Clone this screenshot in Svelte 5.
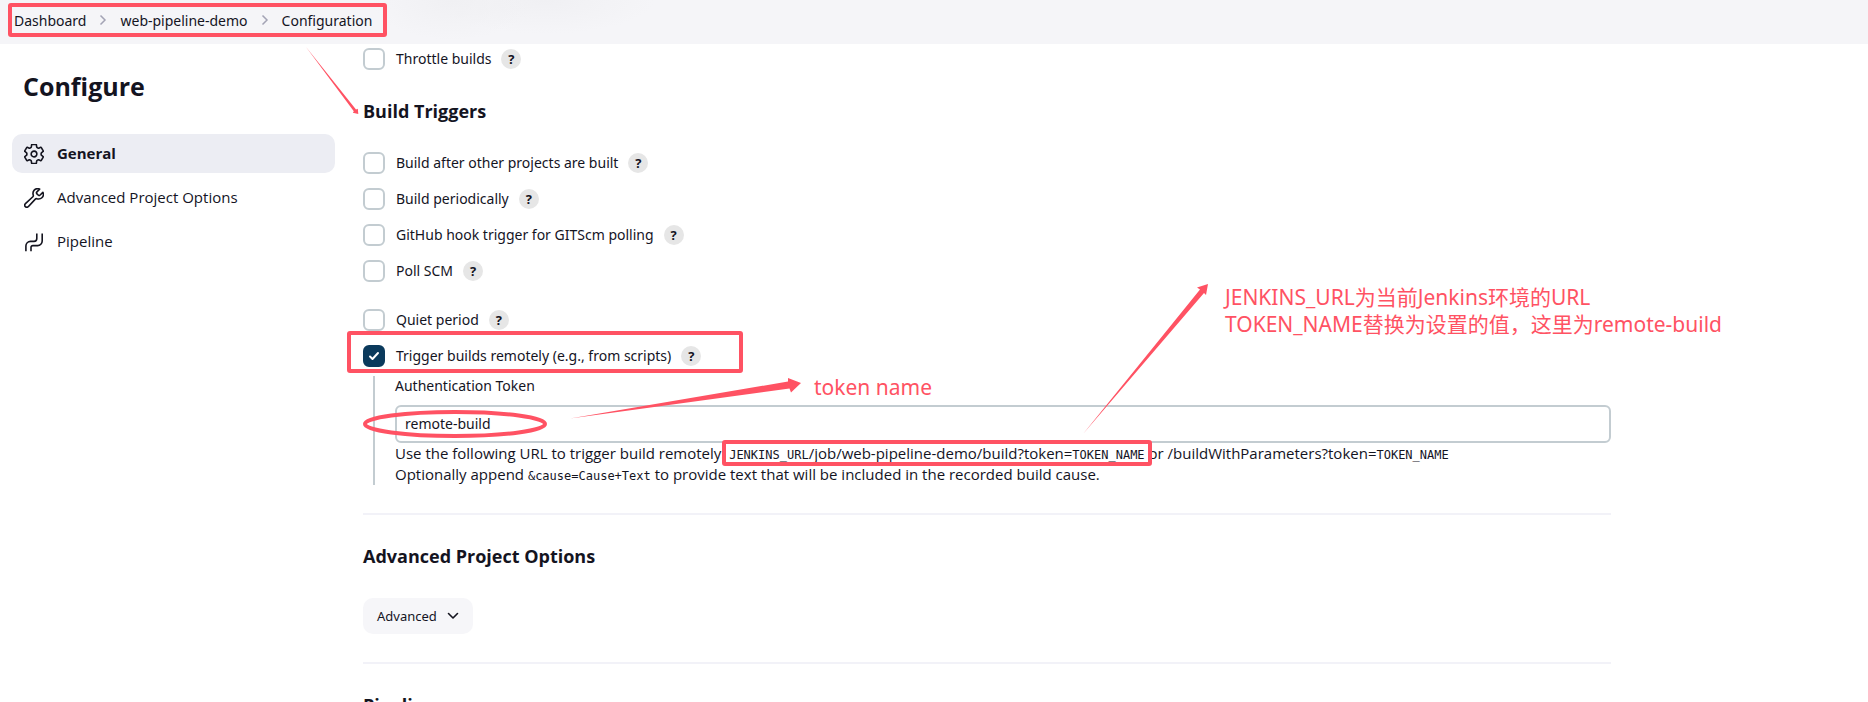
<script>
  const crumbs = ['Dashboard', 'web-pipeline-demo', 'Configuration'];
  const triggers = [
    'Build after other projects are built',
    'Build periodically',
    'GitHub hook trigger for GITScm polling',
    'Poll SCM'
  ];
  let token = $state('remote-build');
  let remote = $state(true);
</script>

{#snippet option(id, label)}
  <div class="option">
    <input type="checkbox" {id} />
    <label for={id}>{label}</label>
    <button class="help" type="button" aria-label="Help: {label}">?</button>
  </div>
{/snippet}

<div class="page">
  <header class="topbar">
    <nav class="crumbs" aria-label="Breadcrumb">
      {#each crumbs as crumb, i}
        {#if i > 0}
          <svg class="sep" viewBox="0 0 8 12" aria-hidden="true"><path d="M1.5 1.5 6 6l-4.5 4.5" /></svg>
        {/if}
        <a href="#top">{crumb}</a>
      {/each}
    </nav>
  </header>

  <div class="body">
    <aside class="side">
      <h1>Configure</h1>
      <nav class="tasks" aria-label="Sections">
        <a class="task active" href="#general">
          <svg viewBox="32 32 448 448" aria-hidden="true">
            <path d="M262.29 192.31a64 64 0 1057.4 57.4 64.13 64.13 0 00-57.4-57.4zM416.39 256a154.34 154.34 0 01-1.53 20.79l45.21 35.46a10.81 10.81 0 012.45 13.75l-42.77 74a10.81 10.81 0 01-13.14 4.59l-44.9-18.08a16.11 16.11 0 00-15.17 1.75A164.48 164.48 0 01325 400.8a15.94 15.94 0 00-8.82 12.14l-6.73 47.89a11.08 11.08 0 01-10.68 9.17h-85.54a11.11 11.11 0 01-10.69-8.87l-6.72-47.82a16.07 16.07 0 00-9-12.22 155.3 155.3 0 01-21.46-12.57 16 16 0 00-15.11-1.71l-44.89 18.07a10.81 10.81 0 01-13.14-4.58l-42.77-74a10.8 10.8 0 012.45-13.75l38.21-30a16.05 16.05 0 006-14.08c-.36-4.17-.58-8.33-.58-12.5s.21-8.27.58-12.35a16 16 0 00-6.07-13.94l-38.19-30A10.81 10.81 0 0149.48 186l42.77-74a10.81 10.81 0 0113.14-4.59l44.9 18.08a16.11 16.11 0 0015.17-1.75A164.48 164.48 0 01187 111.2a15.94 15.94 0 008.82-12.14l6.73-47.89A11.08 11.08 0 01213.23 42h85.54a11.11 11.11 0 0110.69 8.87l6.72 47.82a16.07 16.07 0 009 12.22 155.3 155.3 0 0121.46 12.57 16 16 0 0015.11 1.71l44.89-18.07a10.81 10.81 0 0113.14 4.58l42.77 74a10.8 10.8 0 01-2.45 13.75l-38.21 30a16.05 16.05 0 00-6.05 14.08c.33 4.14.55 8.3.55 12.47z" />
          </svg>
          <span>General</span>
        </a>
        <a class="task" href="#advanced">
          <svg viewBox="32 32 448 448" aria-hidden="true">
            <path d="M393.87 190a32.1 32.1 0 01-45.25 0l-26.57-26.57a32.09 32.09 0 010-45.26L382.19 58a1 1 0 00-.3-1.64c-38.82-16.64-89.15-8.16-121.11 23.57-30.58 30.35-32.32 76-21.12 115.84a31.93 31.93 0 01-9.06 32.08L64 380a48.17 48.17 0 1068 68l153.86-167a31.93 31.93 0 0131.6-9.13c39.54 10.59 84.54 8.6 114.72-21.19 32.49-32 39.5-88.56 23.75-120.93a1 1 0 00-1.6-.26z" />
          </svg>
          <span>Advanced Project Options</span>
        </a>
        <a class="task" href="#pipeline">
          <svg class="pipe" viewBox="0 0 20 20" aria-hidden="true">
            <path d="M1.900 19.200V14A4.600 4.600 0 0 1 6.500 9.400H10A2.800 2.800 0 0 0 12.800 6.600V1.600M7 19.200V15.400A1.800 1.800 0 0 1 8.800 13.600H13.600A4.600 4.600 0 0 0 18.200 9V1.600" />
          </svg>
          <span>Pipeline</span>
        </a>
      </nav>
    </aside>

    <main class="main">
      {@render option('throttle', 'Throttle builds')}
      <h2>Build Triggers</h2>
      <div class="options">
        {#each triggers as label, i}
          {@render option('trigger-' + i, label)}
        {/each}
      </div>
      <div class="options second">
        {@render option('quiet', 'Quiet period')}
        <div class="option">
          <input type="checkbox" id="remote" bind:checked={remote} />
          <label for="remote">Trigger builds remotely (e.g., from scripts)</label>
          <button class="help" type="button" aria-label="Help: remote trigger">?</button>
        </div>
      </div>
      <div class="nested">
        <label for="token">Authentication Token</label>
        <input id="token" type="text" bind:value={token} />
        <p>Use the following URL to trigger build remotely: <span class="boxed"><code>JENKINS_URL</code>/job/web-pipeline-demo/build?token=<code>TOKEN_NAME</code></span> or /buildWithParameters?token=<code>TOKEN_NAME</code></p>
        <p>Optionally append <code>&amp;cause=Cause+Text</code> to provide text that will be included in the recorded build cause.</p>
      </div>
      <hr />
      <h2 id="advanced">Advanced Project Options</h2>
      <button class="advanced" type="button">
        <span>Advanced</span>
        <svg viewBox="0 0 12 12" aria-hidden="true"><path d="M1.5 3.500 6 8l4.500-4.500" /></svg>
      </button>
      <hr />
      <h2 id="pipeline">Pipeline</h2>
    </main>
  </div>

  <svg class="marks" aria-hidden="true">
    <g class="outline">
      <rect x="10" y="5" width="375" height="30" rx="1" />
      <rect x="349" y="333" width="392" height="38" rx="1" />
      <ellipse cx="455" cy="424" rx="90" ry="12" />
    </g>
    <g class="arrow">
      <path d="M306 47 356 109.500 357.800 108.800 358.300 114 352.800 112.800 353.800 111.200Z" />
      <path d="M570 418.500 788 381.500 788 378 801 383 791 392.500 789.500 388.500Z" />
      <path d="M1083 434 1200 289.500 1197 287.500 1208 284 1206 295 1204 293Z" />
    </g>
  </svg>
  <p class="note name">token name</p>
  <p class="note url">JENKINS_URL为当前Jenkins环境的URL<br />TOKEN_NAME替换为设置的值，这里为remote-build</p>
</div>

<style>
  :global(body) {
    background: #fff;
  }
  .page {
    position: relative;
    height: 100vh;
    overflow: hidden;
    color: #14141f;
    font: 14px/21px 'Noto Sans', 'Open Sans', sans-serif;
  }
  .page * {
    box-sizing: border-box;
  }
  a {
    color: inherit;
    text-decoration: none;
  }
  .topbar {
    display: flex;
    align-items: center;
    height: 44px;
    padding: 0 14px 4px;
    background:
      radial-gradient(80px 40px at 452px 0, #f0f0f3, transparent),
      radial-gradient(110px 34px at 545px 0, #f0f0f3, transparent),
      #f5f5f8;
  }
  .crumbs {
    display: flex;
    align-items: center;
    gap: 13px;
  }
  .sep {
    width: 8px;
    height: 12px;
    fill: none;
    stroke: #a3a3b5;
    stroke-width: 1.5;
  }
  .body {
    display: flex;
    gap: 28px;
    padding-left: 12px;
  }
  .side {
    flex: 0 0 323px;
  }
  h1 {
    margin: 25px 0 30px 11px;
    font: 700 25px/35px 'Open Sans', sans-serif;
  }
  .tasks {
    display: flex;
    flex-direction: column;
    gap: 5px;
    font-family: 'Open Sans', sans-serif;
    font-size: 15px;
  }
  .task {
    display: flex;
    align-items: center;
    gap: 13px;
    height: 39px;
    padding: 0 12px;
    border-radius: 10px;
  }
  .task svg {
    width: 20px;
    height: 20px;
    fill: none;
    stroke: currentColor;
    stroke-width: 36;
    stroke-linecap: round;
    stroke-linejoin: round;
  }
  .task .pipe {
    stroke-width: 1.6;
    stroke-linecap: butt;
  }
  .active {
    background: #ecedf3;
    font-weight: 700;
  }
  .main {
    flex: 1;
    max-width: 1248px;
    padding-top: 4px;
  }
  .option {
    display: flex;
    align-items: center;
    height: 22px;
  }
  .option label {
    padding-bottom: 2px;
  }
  .options {
    display: flex;
    flex-direction: column;
    gap: 14px;
  }
  .second {
    margin-top: 27px;
  }
  .option input {
    appearance: none;
    width: 22px;
    height: 22px;
    margin: 0 11px 0 0;
    border: 2px solid #c3ccd1;
    border-radius: 6px;
  }
  .option input:checked {
    border-color: #0b3a5c;
    background: #0b3a5c url("data:image/svg+xml,%3Csvg xmlns='http://www.w3.org/2000/svg' viewBox='0 0 18 18'%3E%3Cpath d='M5 9.500l2.500 2.500L13 6' fill='none' stroke='white' stroke-width='2' stroke-linecap='round' stroke-linejoin='round'/%3E%3C/svg%3E") center / 18px no-repeat;
  }
  .help {
    width: 20px;
    height: 20px;
    margin-left: 10px;
    padding: 0;
    border: 0;
    border-radius: 50%;
    background: #e6e6e6;
    color: #14141f;
    font: 700 13px/20px 'Open Sans', sans-serif;
  }
  h2 {
    margin: 28px 0;
    font: 700 18px/26px 'Open Sans', sans-serif;
  }
  .nested {
    display: flex;
    flex-direction: column;
    margin: 9px 0 28px 10px;
    padding-left: 20px;
    border-left: 2px solid #c3ccd1;
  }
  .nested label {
    line-height: 19px;
  }
  .nested input {
    height: 38px;
    margin-top: 10px;
    padding: 0 8px 2px;
    border: 2px solid #c3ccd1;
    border-radius: 6px;
    color: inherit;
    font: inherit;
  }
  p {
    margin: 0;
  }
  .nested p {
    font-family: 'Open Sans', sans-serif;
    font-size: 15px;
  }
  .boxed {
    position: relative;
  }
  .boxed::after {
    content: '';
    position: absolute;
    inset: -3px -7px;
    border: 4px solid #ff5263;
    border-radius: 3px;
    pointer-events: none;
  }
  code {
    font: 12px/1 'DejaVu Sans Mono', monospace;
  }
  hr {
    height: 2px;
    margin: 28px 0;
    border: 0;
    background: #f2f2f8;
  }
  .advanced {
    display: flex;
    align-items: center;
    gap: 10px;
    height: 36px;
    margin-top: 29px;
    padding: 0 14px;
    border: 0;
    border-radius: 10px;
    background: #f6f6f9;
    color: inherit;
    font: 13px/20px 'Noto Sans', sans-serif;
  }
  .advanced svg {
    width: 12px;
    height: 12px;
    fill: none;
    stroke: currentColor;
    stroke-width: 1.6;
    stroke-linecap: round;
    stroke-linejoin: round;
  }
  .marks {
    position: absolute;
    inset: 0;
    width: 100%;
    height: 100%;
    pointer-events: none;
  }
  .outline {
    fill: none;
    stroke: #ff5263;
    stroke-width: 4;
  }
  .arrow {
    fill: #ff5263;
  }
  .note {
    position: absolute;
    color: #ff5263;
    font: 21px/27px 'Noto Sans', 'Noto Sans CJK SC', sans-serif;
    white-space: nowrap;
  }
  .name {
    left: 814px;
    top: 374px;
  }
  .url {
    left: 1225px;
    top: 284px;
  }
</style>
